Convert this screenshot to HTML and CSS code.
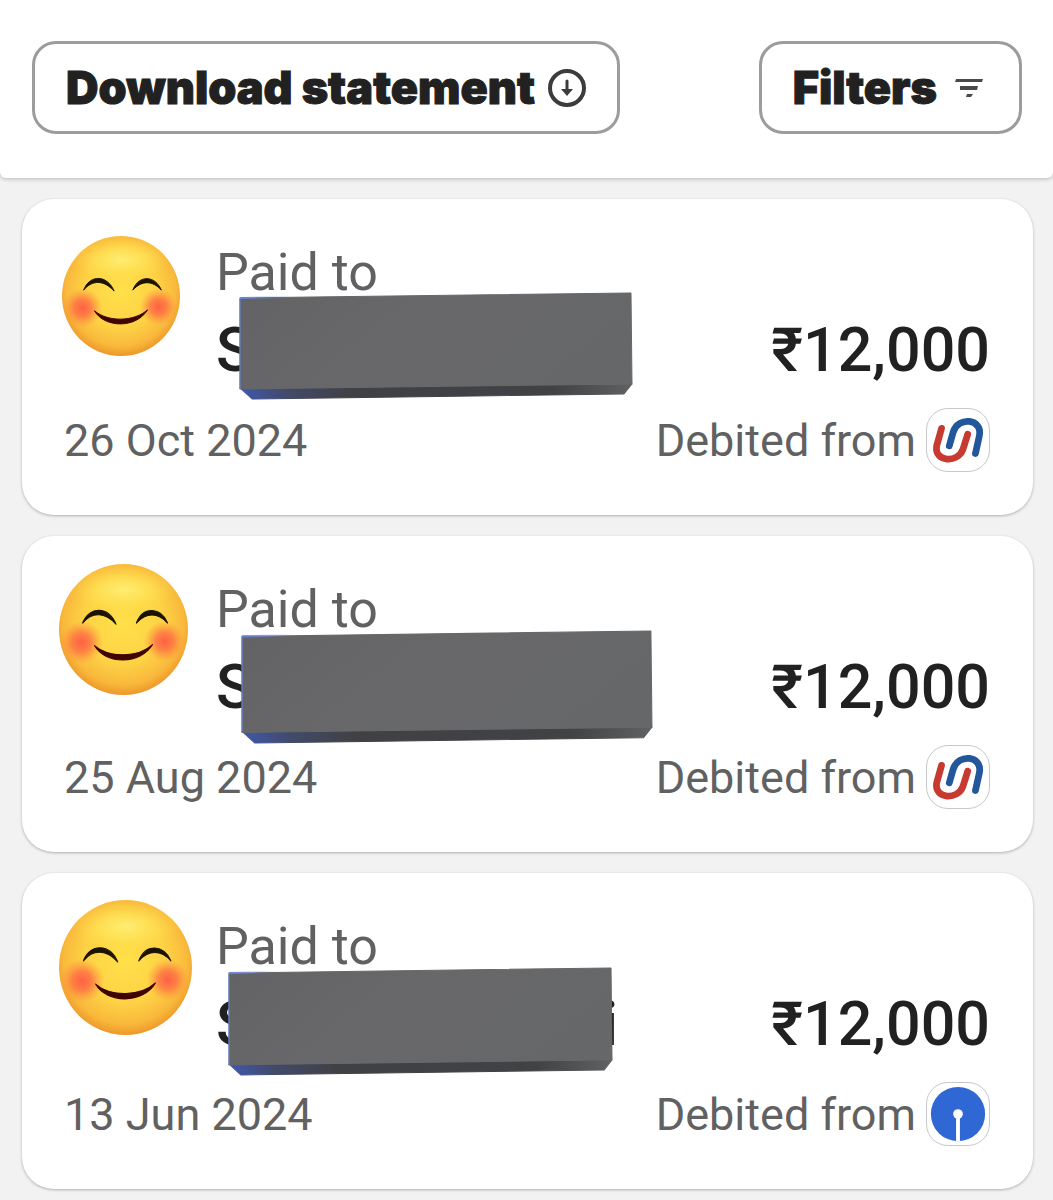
FILE: index.html
```
<!DOCTYPE html>
<html lang="en">
<head>
  <meta charset="UTF-8">
  <meta name="viewport" content="width=device-width, initial-scale=1.0">
  <title>Transaction History</title>
  <link rel="stylesheet" href="styles.css">
</head>
<body>
  <!-- Shared drawings -->
  <svg class="defs" width="0" height="0" aria-hidden="true">
    <defs>
      <radialGradient id="face" cx="50%" cy="45%" r="57%">
        <stop offset="0" stop-color="#ffe04a"/>
        <stop offset="0.55" stop-color="#fdd245"/>
        <stop offset="0.82" stop-color="#f9b93c"/>
        <stop offset="1" stop-color="#ea8f24"/>
      </radialGradient>
      <radialGradient id="shine">
        <stop offset="0" stop-color="#fff07a" stop-opacity="0.9"/>
        <stop offset="0.5" stop-color="#ffe75c" stop-opacity="0.6"/>
        <stop offset="1" stop-color="#ffdf4a" stop-opacity="0"/>
      </radialGradient>
      <radialGradient id="blush">
        <stop offset="0" stop-color="#ff5a45" stop-opacity="0.95"/>
        <stop offset="0.45" stop-color="#ff6445" stop-opacity="0.7"/>
        <stop offset="1" stop-color="#ff8a3c" stop-opacity="0"/>
      </radialGradient>
      <linearGradient id="front" x1="0" y1="0" x2="1" y2="0.3">
        <stop offset="0" stop-color="#636365"/>
        <stop offset="0.5" stop-color="#68686a"/>
        <stop offset="1" stop-color="#666769"/>
      </linearGradient>
      <linearGradient id="under" x1="0" y1="0" x2="1" y2="0">
        <stop offset="0" stop-color="#3f58ac"/>
        <stop offset="0.12" stop-color="#424a69"/>
        <stop offset="0.28" stop-color="#404144"/>
        <stop offset="0.8" stop-color="#414244"/>
        <stop offset="1" stop-color="#606163"/>
      </linearGradient>
      <linearGradient id="glow" x1="0" y1="0" x2="1" y2="0">
        <stop offset="0" stop-color="#6585dc"/>
        <stop offset="1" stop-color="#6585dc" stop-opacity="0"/>
      </linearGradient>
    </defs>
    <symbol id="smiley" viewBox="0 0 120 122" preserveAspectRatio="none">
      <ellipse cx="60" cy="61" rx="60" ry="61" fill="url(#face)"/>
      <ellipse cx="60" cy="24" rx="48" ry="22" fill="url(#shine)"/>
      <circle cx="21" cy="73" r="20" fill="url(#blush)"/>
      <circle cx="98" cy="72" r="19" fill="url(#blush)"/>
      <path d="M22 55c6-16 24-16 31 1-10-11-22-12-31-1z" fill="#1b1200" stroke="#1b1200" stroke-linejoin="round"/>
      <path d="M72 55c6-16 23-15 29 0-9-10-20-10-29 0z" fill="#1b1200" stroke="#1b1200" stroke-linejoin="round"/>
      <path d="M33 76c10 18 43 18 54-1-13 12-40 13-54 1z" fill="#3f0500" stroke="#3f0500" stroke-linejoin="round"/>
    </symbol>
    <symbol id="brick" viewBox="0 0 393 108" preserveAspectRatio="none">
      <path d="M1 96l12 11 371-5 8-10z" fill="url(#under)" stroke="url(#under)" stroke-linejoin="round"/>
      <path d="M1 6l390-5 1 91-391 5z" fill="url(#front)" stroke="url(#front)" stroke-linejoin="round"/>
      <path d="M1 6v91" stroke="#6585dc"/>
      <path d="M1 5l50-1v2L1 7z" fill="url(#glow)"/>
    </symbol>
    <symbol id="union-bank" viewBox="0 0 64 64">
      <g fill="none" stroke-width="7" stroke-linecap="round">
        <path d="M15 20l-5 18c-3 17 22 18 27 4l5-16" stroke="#c73a30"/>
        <path d="M23 38l4-14c5-17 31-14 27 4l-4 18" stroke="#22589b"/>
      </g>
    </symbol>
    <symbol id="sbi" viewBox="0 0 64 64">
      <circle cx="32" cy="32" r="28" fill="#2f68d5"/>
      <circle cx="32" cy="32" r="5" fill="#fff"/>
      <path d="M32 32v28" stroke="#fff" stroke-width="4"/>
    </symbol>
  </svg>

  <header class="toolbar">
    <button type="button" class="tool-button">
      Download statement
      <svg class="tool-icon" viewBox="0 0 38 38" aria-hidden="true">
        <circle cx="19" cy="19" r="17" fill="none" stroke="#3c3c3c" stroke-width="4"/>
        <path d="M19 12v9" stroke="#3c3c3c" stroke-width="3" stroke-linecap="round"/>
        <path d="M13 20h12l-6 7z" fill="#3c3c3c"/>
      </svg>
    </button>
    <button type="button" class="tool-button">
      Filters
      <svg class="tool-icon" viewBox="0 0 38 38" aria-hidden="true">
        <path d="M6 10h27l-1 3H5zM10 17h18l-1 4H10zM17 25h6l-2 3h-5z" fill="#4a4a4a"/>
      </svg>
    </button>
  </header>

  <main class="transactions">
    <article class="card">
      <p class="label">Paid to</p>
      <div class="payment">
        <p class="name">S</p>
        <p class="amount">₹12,000</p>
      </div>
      <div class="details">
        <time datetime="2024-10-26">26 Oct 2024</time>
        <span class="bank">Debited from <svg class="bank-logo" aria-hidden="true"><use href="#union-bank"/></svg></span>
      </div>
      <svg class="smiley smiley-small" aria-hidden="true"><use href="#smiley"/></svg>
      <svg class="brick brick-first" aria-hidden="true"><use href="#brick"/></svg>
    </article>

    <article class="card">
      <p class="label">Paid to</p>
      <div class="payment">
        <p class="name">S</p>
        <p class="amount">₹12,000</p>
      </div>
      <div class="details">
        <time datetime="2024-08-25">25 Aug 2024</time>
        <span class="bank">Debited from <svg class="bank-logo" aria-hidden="true"><use href="#union-bank"/></svg></span>
      </div>
      <svg class="smiley smiley-medium" aria-hidden="true"><use href="#smiley"/></svg>
      <svg class="brick brick-second" aria-hidden="true"><use href="#brick"/></svg>
    </article>

    <article class="card">
      <p class="label">Paid to</p>
      <div class="payment">
        <p class="name name-long"><span>S</span><span>i</span></p>
        <p class="amount">₹12,000</p>
      </div>
      <div class="details">
        <time datetime="2024-06-13">13 Jun 2024</time>
        <span class="bank">Debited from <svg class="bank-logo" aria-hidden="true"><use href="#sbi"/></svg></span>
      </div>
      <svg class="smiley smiley-large" aria-hidden="true"><use href="#smiley"/></svg>
      <svg class="brick brick-third" aria-hidden="true"><use href="#brick"/></svg>
    </article>
  </main>
</body>
</html>
```
FILE: styles.css
```
* {
  box-sizing: border-box;
}

body {
  margin: 0;
  background-color: #f2f2f2;
  color: #212121;
  font-family: Roboto, sans-serif;
}

p {
  margin: 0;
}

.defs {
  position: absolute;
}

.toolbar {
  display: flex;
  justify-content: space-between;
  align-items: center;
  padding: 41px 31px 44px 32px;
  background-color: #fff;
  border-radius: 0 0 6px 6px;
  box-shadow: 0 1px 4px rgba(0, 0, 0, 0.25);
}

.tool-button {
  display: flex;
  align-items: center;
  gap: 13px;
  padding: 16px 31px;
  border: 3px solid #9c9c9c;
  border-radius: 24px;
  background-color: #fff;
  color: #212121;
  font-family: Inter, sans-serif;
  font-size: 45px;
  font-weight: 900;
  line-height: 55px;
  -webkit-text-stroke: 1px #212121;
  stroke-linejoin: round;
  white-space: nowrap;
  cursor: pointer;
}

.tool-icon {
  flex: none;
  width: 38px;
  height: 38px;
}

.transactions {
  display: flex;
  flex-direction: column;
  gap: 21px;
  padding: 21px 20px 11px 22px;
}

.card {
  position: relative;
  padding: 38px 43px 43px 42px;
  background-color: #fff;
  border-radius: 32px;
  box-shadow: 0 1px 3px rgba(0, 0, 0, 0.28);
}

.label {
  padding-left: 152px;
  color: #616161;
  font-size: 52px;
  line-height: 72px;
}

.payment {
  display: flex;
  justify-content: space-between;
  padding-left: 152px;
  font-size: 61px;
  font-weight: 500;
  line-height: 82px;
}

.name-long {
  display: flex;
  justify-content: space-between;
  width: 402px;
}

.details {
  display: flex;
  justify-content: space-between;
  align-items: center;
  margin-top: 17px;
  color: #616161;
  font-size: 45px;
}

.bank {
  display: flex;
  align-items: center;
  gap: 10px;
}

.bank-logo {
  width: 64px;
  height: 64px;
  border: 1px solid #c8c8cc;
  border-radius: 22px;
}

/* Stickers lying over the cards */
.smiley,
.brick {
  position: absolute;
}

.smiley-small {
  left: 40px;
  top: 37px;
  width: 118px;
  height: 120px;
}

.smiley-medium {
  left: 37px;
  top: 28px;
  width: 129px;
  height: 131px;
}

.smiley-large {
  left: 37px;
  top: 27px;
  width: 133px;
  height: 135px;
}

.brick-first {
  left: 217px;
  top: 93px;
  width: 394px;
  height: 108px;
}

.brick-second {
  left: 219px;
  top: 94px;
  width: 412px;
  height: 114px;
}

.brick-third {
  left: 206px;
  top: 94px;
  width: 385px;
  height: 109px;
}
```
